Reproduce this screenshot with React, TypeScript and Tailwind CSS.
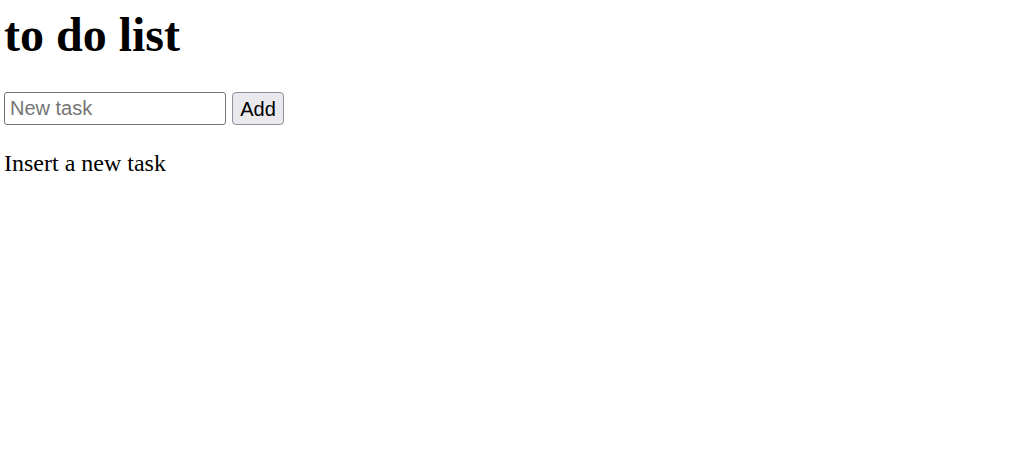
import React from "react";

export default function App() {
  return (
    <div className="min-h-[451px] bg-white px-[4px] pt-[8px] text-black" style={{ fontFamily: '"Liberation Serif", serif' }}>
      <h1 className="m-0 text-[48px] font-bold leading-[53px]">to do list</h1>
      <div className="mt-[31px] flex items-start gap-[6px]">
        <input
          type="text"
          placeholder="New task"
          className="box-border h-[33px] w-[222px] rounded-[3px] border border-[#767676] bg-white px-[5px] text-[20px] text-black outline-none placeholder:text-[#757575]"
          style={{ fontFamily: '"Liberation Sans", sans-serif' }}
        />
        <button
          className="box-border h-[33px] w-[52px] rounded-[4px] border border-[#8f8f9d] bg-[#e9e9ed] text-[20px] leading-none text-black"
          style={{ fontFamily: '"Liberation Sans", sans-serif' }}
        >
          Add
        </button>
      </div>
      <p className="mt-[25px] text-[24px] leading-[27px]">Insert a new task</p>
    </div>
  );
}
